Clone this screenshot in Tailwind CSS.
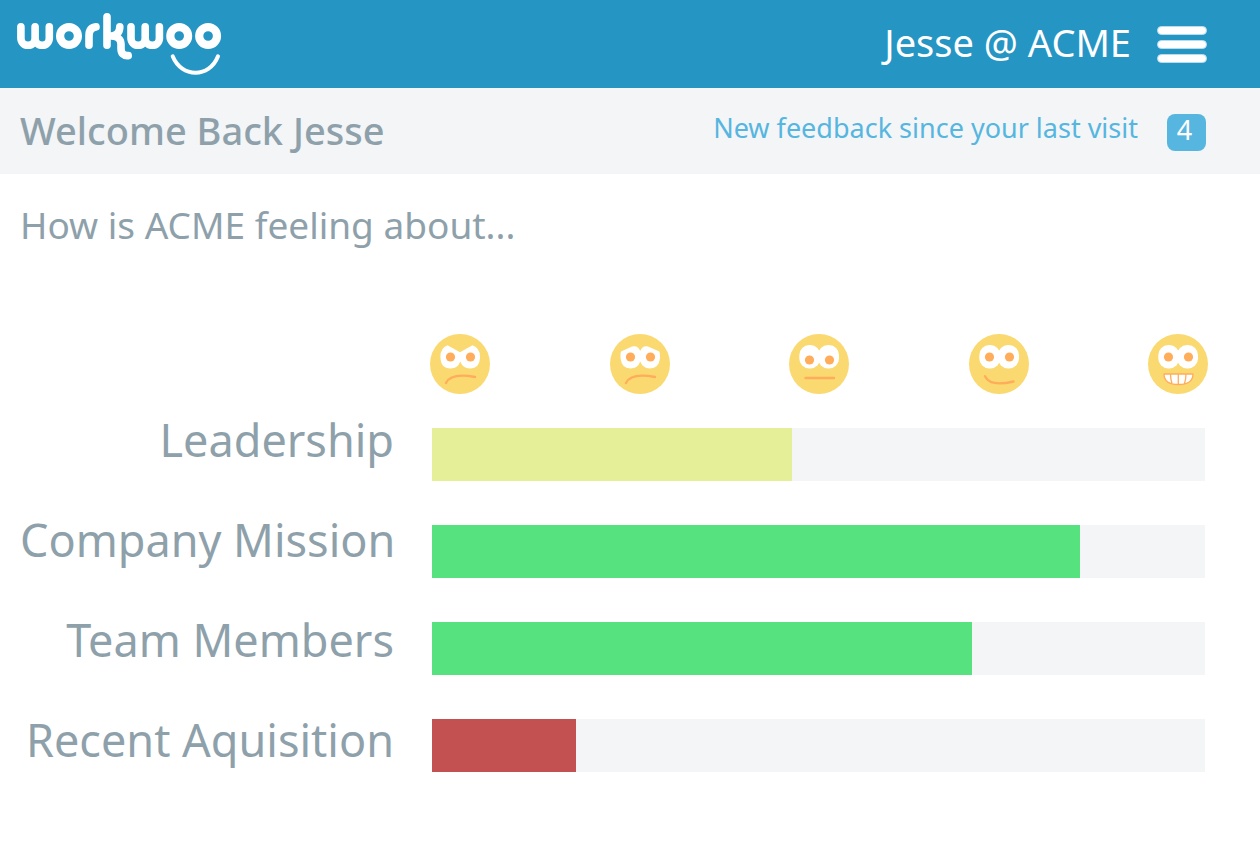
<!DOCTYPE html>
<html lang="en">
<head>
<meta charset="utf-8">
<meta name="viewport" content="width=device-width, initial-scale=1">
<title>Workwoo</title>
<script src="https://cdn.jsdelivr.net/npm/@tailwindcss/browser@4"></script>
</head>
<body class="bg-white font-['Noto_Sans',sans-serif] text-[#8ea1ab]">
<header class="flex h-[88px] items-center justify-between bg-[#2595c4] pr-[53px] pl-4 text-white">
  <a href="#" aria-label="workwoo">
    <svg class="h-[66px] w-[206px]" viewBox="16 11 206 66" fill="none" stroke="currentColor" stroke-width="7.6" stroke-linecap="round" stroke-linejoin="round">
      <path d="M20.900 26.800V38.200A7.100 7.100 0 0 0 35.100 38.200V26.800V38.200A7.100 7.100 0 0 0 49.300 38.200V26.800"/>
      <circle cx="69" cy="36" r="8.900" stroke-width="8.200"/>
      <path d="M89 45.200V36Q89 27.500 96 26.900"/>
      <path d="M107 16.900V45.200M107 36H111C117 36 119.800 32 119.800 26.800M111 36C117 36 121 39 121 44V48.500C121 53.500 123.500 56 128.200 55.600"/>
      <path d="M131 26.800V38.200A7.100 7.100 0 0 0 145.200 38.200V26.800V38.200A7.100 7.100 0 0 0 159.400 38.200V26.800"/>
      <circle cx="179.200" cy="36" r="8.900" stroke-width="8.200"/>
      <circle cx="208.100" cy="36" r="8.900" stroke-width="8.200"/>
      <path stroke-width="4" d="M172.700 56.300C181.500 78.200 209.500 78.200 218 56.300"/>
    </svg>
  </a>
  <div class="flex items-center gap-[26px]">
    <span class="pb-1 text-[38px]">Jesse @ ACME</span>
    <button type="button" aria-label="Menu" class="flex w-[50px] flex-col gap-[5px]">
      <span class="h-[9px] w-full rounded-full border border-[#b9dcec] bg-white"></span>
      <span class="h-[9px] w-full rounded-full border border-[#b9dcec] bg-white"></span>
      <span class="h-[9px] w-full rounded-full border border-[#b9dcec] bg-white"></span>
    </button>
  </div>
</header>
<section class="flex h-[86px] items-center justify-between bg-[#f3f5f7] pt-[2px] pr-[54px] pl-5">
  <h1 class="pb-1 text-[38px] font-medium">Welcome Back Jesse</h1>
  <a href="#" class="flex items-center gap-[29px] text-[27px] text-[#56b6df]">
    <span class="pb-2">New feedback since your last visit</span>
    <span class="flex h-[37px] w-[39px] items-center justify-center rounded-lg bg-[#56b6df] pr-1 pb-1 text-white">4</span>
  </a>
</section>
<main class="pt-[26px] pr-[52px] pl-5">
  <h2 class="text-[37px] leading-[50px]">How is ACME feeling about...</h2>
  <div class="mt-[84px] ml-[410px] flex justify-between">
    <svg class="size-[60px]" viewBox="0 0 60 60" role="img" aria-label="Angry">
      <circle cx="30" cy="30" r="30" fill="#fad971"/>
      <path fill="#fff" d="M17.500 11.200L30 18.300L42.500 11.200Q50 14 50 22.500Q50 34.400 39.800 34.400Q33 34.400 30.200 27.500Q28 34.400 20.500 34.400Q10.400 34.400 10.400 22.500Q10.400 14 17.500 11.200Z"/>
      <circle cx="20.500" cy="23" r="4.600" fill="#ffad5b"/><circle cx="40.500" cy="23" r="4.600" fill="#ffad5b"/>
      <path d="M16 49Q21 38.500 45 43" fill="none" stroke="#ffad5b" stroke-width="2.400" stroke-linecap="round"/>
    </svg>
    <svg class="size-[60px]" viewBox="0 0 60 60" role="img" aria-label="Sad">
      <circle cx="30" cy="30" r="30" fill="#fad971"/>
      <path fill="#fff" d="M11 17.500L22 12.500Q28 11 30.200 17Q32.500 11 38 12.500L49.300 17.500Q50 19 50 24Q49 34.400 40 34.400Q33 34.400 30.200 27.500Q28 34.400 20.500 34.400Q11.500 34.400 10.500 24Q10.300 19 11 17.500Z"/>
      <circle cx="20.500" cy="23" r="4.600" fill="#ffad5b"/><circle cx="40.500" cy="23" r="4.600" fill="#ffad5b"/>
      <path d="M16 49Q21 38.500 45 43" fill="none" stroke="#ffad5b" stroke-width="2.400" stroke-linecap="round"/>
    </svg>
    <svg class="size-[60px]" viewBox="0 0 60 60" role="img" aria-label="Neutral">
      <circle cx="30" cy="30" r="30" fill="#fad971"/>
      <rect x="10.300" y="11" width="21" height="23.500" rx="10" fill="#fff"/><rect x="29" y="11" width="21" height="23.500" rx="10" fill="#fff"/>
      <circle cx="20.500" cy="26" r="4.600" fill="#ffad5b"/><circle cx="40.500" cy="26" r="4.600" fill="#ffad5b"/>
      <path d="M16.500 44H45" fill="none" stroke="#ffad5b" stroke-width="2.400" stroke-linecap="round"/>
    </svg>
    <svg class="size-[60px]" viewBox="0 0 60 60" role="img" aria-label="Happy">
      <circle cx="30" cy="30" r="30" fill="#fad971"/>
      <rect x="10.300" y="11" width="21" height="23.500" rx="10" fill="#fff"/><rect x="29" y="11" width="21" height="23.500" rx="10" fill="#fff"/>
      <circle cx="20.500" cy="23" r="4.600" fill="#ffad5b"/><circle cx="40.500" cy="23" r="4.600" fill="#ffad5b"/>
      <path d="M16 42.200Q21 53 44.500 47.500" fill="none" stroke="#ffad5b" stroke-width="2.400" stroke-linecap="round"/>
    </svg>
    <svg class="size-[60px]" viewBox="0 0 60 60" role="img" aria-label="Delighted">
      <circle cx="30" cy="30" r="30" fill="#fad971"/>
      <rect x="10.300" y="11" width="21" height="23.500" rx="10" fill="#fff"/><rect x="29" y="11" width="21" height="23.500" rx="10" fill="#fff"/>
      <circle cx="20.500" cy="23" r="4.600" fill="#ffad5b"/><circle cx="40.500" cy="23" r="4.600" fill="#ffad5b"/>
      <path d="M16 40H45Q45 50.500 30.500 50.500Q16 50.500 16 40ZM22.500 40Q22.500 45 24 49.500M30.300 40V50.500M38 40Q38 45 36.500 49.500" fill="#fff" stroke="#ffad5b" stroke-width="1.300" stroke-linejoin="round"/>
    </svg>
  </div>
  <div class="mt-4 flex gap-[38px] pr-[3px]">
    <div class="flex w-[374px] shrink-0 flex-col gap-10 text-right text-[45px] leading-[60px] whitespace-nowrap">
      <span id="leadership">Leadership</span>
      <span id="mission">Company Mission</span>
      <span id="team">Team Members</span>
      <span id="aquisition">Recent Aquisition</span>
    </div>
    <div class="flex flex-1 flex-col gap-11 pt-[18px]">
      <div role="meter" aria-labelledby="leadership" aria-valuenow="47" class="h-[53px] bg-[#f3f5f7]"><div class="h-full bg-[#e5ef97]" style="width:46.6%"></div></div>
      <div role="meter" aria-labelledby="mission" aria-valuenow="84" class="h-[53px] bg-[#f3f5f7]"><div class="h-full bg-[#56e27e]" style="width:83.8%"></div></div>
      <div role="meter" aria-labelledby="team" aria-valuenow="70" class="h-[53px] bg-[#f3f5f7]"><div class="h-full bg-[#56e27e]" style="width:69.9%"></div></div>
      <div role="meter" aria-labelledby="aquisition" aria-valuenow="19" class="h-[53px] bg-[#f3f5f7]"><div class="h-full bg-[#c45151]" style="width:18.6%"></div></div>
    </div>
  </div>
</main>
</body>
</html>
